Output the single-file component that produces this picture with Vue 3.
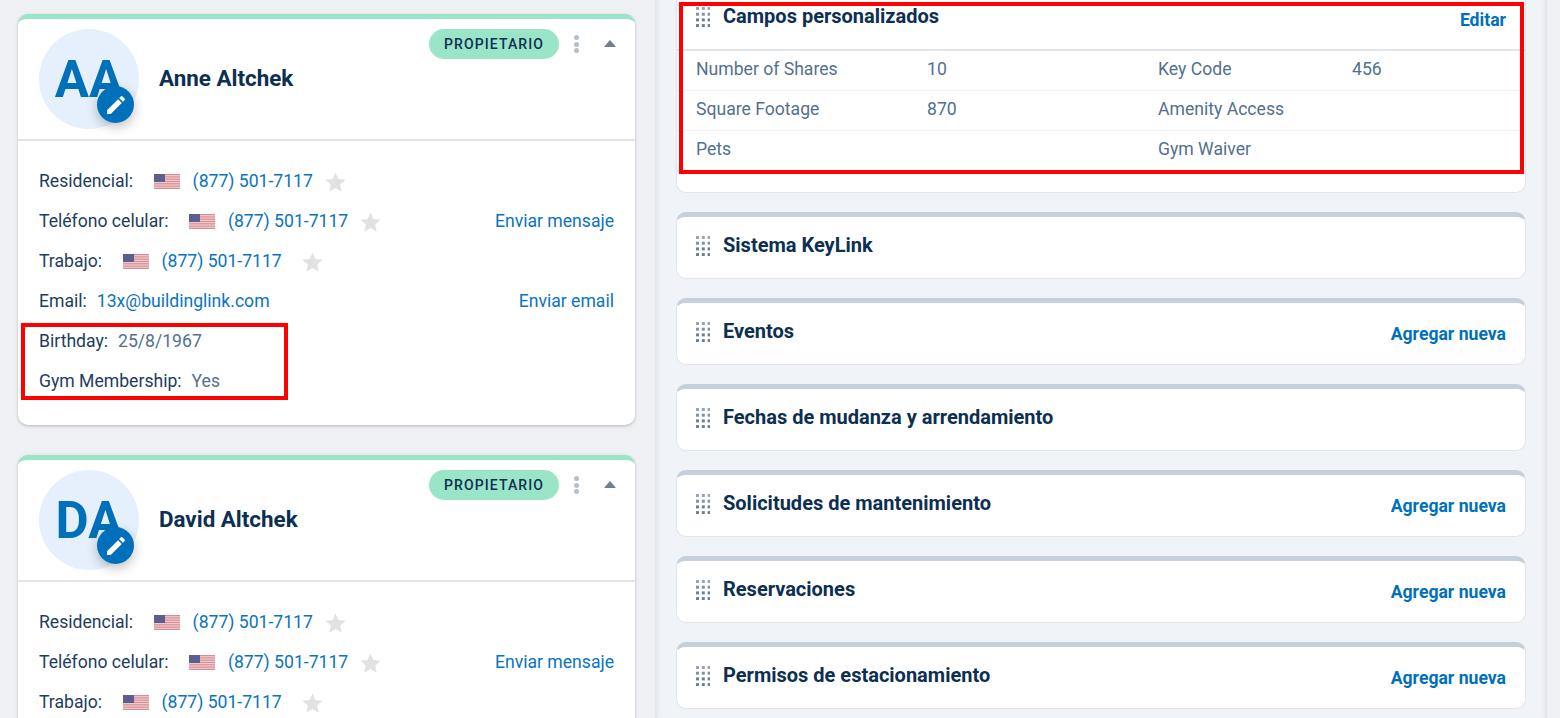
<script setup>
const people = [
  { initials: 'AA', name: 'Anne Altchek', email: '13x@buildinglink.com', extra: [
    { label: 'Birthday:', value: '25/8/1967' },
    { label: 'Gym Membership:', value: 'Yes' }
  ] },
  { initials: 'DA', name: 'David Altchek', email: '', extra: [] }
]
const phones = [
  { label: 'Residencial:', action: '', wide: false },
  { label: 'Teléfono celular:', action: 'Enviar mensaje', wide: false },
  { label: 'Trabajo:', action: '', wide: true }
]
const customRows = [
  ['Number of Shares', '10', 'Key Code', '456'],
  ['Square Footage', '870', 'Amenity Access', ''],
  ['Pets', '', 'Gym Waiver', '']
]
const sections = [
  { title: 'Sistema KeyLink', action: '' },
  { title: 'Eventos', action: 'Agregar nueva' },
  { title: 'Fechas de mudanza y arrendamiento', action: '' },
  { title: 'Solicitudes de mantenimiento', action: 'Agregar nueva' },
  { title: 'Reservaciones', action: 'Agregar nueva' },
  { title: 'Permisos de estacionamiento', action: 'Agregar nueva' }
]
const dots = []
for (let y = 0; y < 4; y++) for (let x = 0; x < 3; x++) dots.push({ x: x * 5.8 + 1, y: y * 5.7 + 1, o: y === 0 ? 0.7 : y === 1 ? 0.85 : 1 })
</script>

<template>
  <div class="page">
    <section class="left">
      <article v-for="p in people" :key="p.name" class="person">
        <header class="person-head">
          <div class="avatar">
            <span>{{ p.initials }}</span>
            <button class="edit" aria-label="Editar">
              <svg width="24" height="24" viewBox="0 0 24 24"><path fill="#fff" d="M3 17.25V21h3.75L17.81 9.94l-3.75-3.75L3 17.25zM20.71 7.04a1 1 0 0 0 0-1.41l-2.34-2.34a1 1 0 0 0-1.41 0l-1.83 1.83 3.75 3.75 1.83-1.83z"/></svg>
            </button>
          </div>
          <h2>{{ p.name }}</h2>
          <div class="tools">
            <span class="pill">PROPIETARIO</span>
            <span class="kebab"><i></i><i></i><i></i></span>
            <span class="caret"></span>
          </div>
        </header>
        <div class="person-body">
          <div v-for="ph in phones" :key="ph.label" class="line">
            <span class="lbl">{{ ph.label }}</span>
            <svg class="flag" width="26" height="15" viewBox="0 0 26 15">
              <rect width="26" height="15" fill="#efd3d5"/>
              <g fill="#d98d92">
                <rect y="0" width="26" height="1.2"/><rect y="2.3" width="26" height="1.2"/><rect y="4.6" width="26" height="1.2"/>
                <rect y="6.9" width="26" height="1.2"/><rect y="9.2" width="26" height="1.2"/><rect y="11.5" width="26" height="1.2"/><rect y="13.8" width="26" height="1.2"/>
              </g>
              <rect width="11" height="8" fill="#5b5e8f"/>
            </svg>
            <a class="link phone">(877) 501-7117</a>
            <svg class="star" :class="{ wide: ph.wide }" width="23" height="22" viewBox="0 0 24 24"><path fill="#e1e2e3" d="M12 1.6l3.2 7.2 7.8.8-5.9 5.2 1.7 7.7L12 18.5l-6.8 4 1.7-7.7L1 9.6l7.8-.8z"/></svg>
            <a v-if="ph.action" class="link end">{{ ph.action }}</a>
          </div>
          <div v-if="p.email" class="line">
            <span class="lbl">Email:</span>
            <a class="link mail">{{ p.email }}</a>
            <a class="link end">Enviar email</a>
          </div>
          <div v-for="e in p.extra" :key="e.label" class="line">
            <span class="lbl">{{ e.label }}</span>
            <span class="val">{{ e.value }}</span>
          </div>
        </div>
      </article>
    </section>

    <main class="right">
      <div class="stack">
        <article class="box">
          <header class="box-head ruled">
            <svg class="grip" width="15" height="21" viewBox="0 0 15 21"><rect v-for="(d, i) in dots" :key="i" :x="d.x" :y="d.y" :opacity="d.o" width="3" height="3" fill="#6c7f94"/></svg>
            <h3>Campos personalizados</h3>
            <a class="act">Editar</a>
          </header>
          <div v-for="r in customRows" :key="r[0]" class="row">
            <span v-for="(c, i) in r" :key="i">{{ c }}</span>
          </div>
        </article>
        <article v-for="s in sections" :key="s.title" class="box">
          <header class="box-head">
            <svg class="grip" width="15" height="21" viewBox="0 0 15 21"><rect v-for="(d, i) in dots" :key="i" :x="d.x" :y="d.y" :opacity="d.o" width="3" height="3" fill="#6c7f94"/></svg>
            <h3>{{ s.title }}</h3>
            <a v-if="s.action" class="act">{{ s.action }}</a>
          </header>
        </article>
      </div>
    </main>
    <aside class="rail"></aside>

    <div class="mark mark-a"></div>
    <div class="mark mark-b"></div>
  </div>
</template>

<style>
html, body { margin: 0; overflow: hidden; }
</style>

<style scoped>
.page {
  position: relative;
  display: flex;
  width: 1560px;
  height: 718px;
  overflow: hidden;
  font-family: Roboto, "Liberation Sans", sans-serif;
  font-size: 17.6px;
  color: #1d3d5e;
}
.left {
  width: 655px;
  box-sizing: border-box;
  padding: 14px 20px 0 18px;
  background: #eff0f4;
  display: flex;
  flex-direction: column;
  gap: 30px;
  flex: none;
}
.person {
  flex: none;
  background: #fff;
  border-top: 5px solid #9ae5c8;
  border-radius: 10px;
  box-shadow: 0 1px 3px rgba(40, 50, 70, .3);
}
.person-head {
  position: relative;
  height: 122px;
  box-sizing: border-box;
  display: flex;
  align-items: center;
  padding: 0 21px;
  border-bottom: 2px solid #e2e4e6;
}
.avatar {
  position: relative;
  width: 100px;
  height: 100px;
  border-radius: 50%;
  background: #e5f0fc;
  color: #0070bb;
  font-size: 51px;
  font-weight: 700;
  display: flex;
  align-items: center;
  justify-content: center;
  flex: none;
}
.edit {
  position: absolute;
  left: 58px;
  top: 57px;
  width: 37px;
  height: 37px;
  padding: 0;
  border: 0;
  border-radius: 50%;
  background: #0070bb;
  display: flex;
  align-items: center;
  justify-content: center;
  box-shadow: 0 4px 12px rgba(0, 0, 0, .25);
}
h2 {
  margin: -2px 0 0 20px;
  font-size: 22.4px;
  font-weight: 700;
  color: #0c2f52;
}
.tools {
  position: absolute;
  top: 10px;
  right: 19px;
  display: flex;
  align-items: center;
}
.pill {
  width: 130px;
  height: 30px;
  border-radius: 15px;
  background: #9ae5c8;
  color: #0c2f52;
  font-size: 14px;
  font-weight: 500;
  letter-spacing: 1.1px;
  display: flex;
  align-items: center;
  justify-content: center;
}
.kebab {
  margin-left: 15px;
  display: flex;
  flex-direction: column;
  gap: 1.5px;
}
.kebab i {
  width: 5px;
  height: 5px;
  border-radius: 50%;
  background: #b5bfcb;
}
.caret {
  margin: 0 0 1px 25px;
  width: 0;
  height: 0;
  border-left: 6.5px solid transparent;
  border-right: 6.5px solid transparent;
  border-bottom: 7px solid #6c7f91;
}
.person-body {
  padding: 20px 21px 24px;
}
.line {
  height: 40px;
  display: flex;
  align-items: center;
}
.flag { margin-left: 21px; flex: none; }
.phone { margin-left: 12.5px; }
.mail { margin-left: 10px; }
.star { margin: 1px 0 0 11px; flex: none; }
.star.wide { margin-left: 19px; }
.link { color: #0a74bd; }
.end { margin-left: auto; }
.val { margin-left: 10px; color: #53708f; }
.right {
  width: 892px;
  box-sizing: border-box;
  padding: 0 21px;
  background: #f0f3f8;
  box-shadow: inset 6px 0 6px -6px rgba(60, 70, 90, .18), inset -6px 0 6px -6px rgba(60, 70, 90, .18);
  flex: none;
}
.stack {
  margin-top: -17px;
  display: flex;
  flex-direction: column;
  gap: 19px;
}
.box {
  background: #fff;
  border: 1px solid #e2e5ea;
  border-top: 5px solid #c5d0da;
  border-radius: 10px;
  flex: none;
}
.box:first-child { padding-bottom: 21px; }
.box-head {
  height: 61px;
  box-sizing: border-box;
  display: flex;
  align-items: center;
  padding: 0 19px 6px 18px;
}
.box-head.ruled { height: 63px; border-bottom: 2px solid #e2e4e6; }
.grip { flex: none; margin-top: 2px; }
h3 {
  margin: 0 0 0 13px;
  font-size: 20px;
  font-weight: 700;
  color: #0c2f52;
}
.act {
  margin: 7px 0 0 auto;
  color: #0070bb;
  font-size: 17.6px;
  font-weight: 700;
}
.ruled .act { margin-top: 9px; }
.row {
  height: 40px;
  box-sizing: border-box;
  display: grid;
  grid-template-columns: 231px 231px 194px 1fr;
  align-items: center;
  padding: 0 0 3px 19px;
  border-bottom: 1px solid #eff0f2;
  color: #53708f;
}
.rail {
  flex: 1;
  background: #eff0f4;
}
.mark {
  position: absolute;
  box-sizing: border-box;
  border: 4px solid #f00;
}
.mark-a { left: 21px; top: 323px; width: 267px; height: 77px; }
.mark-b { left: 679px; top: 2px; width: 845px; height: 172px; }
</style>
